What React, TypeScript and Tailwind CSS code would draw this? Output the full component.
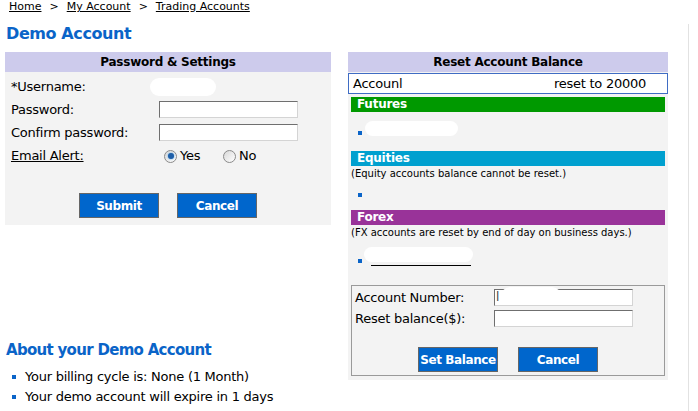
import React from "react";

const font = "font-['DejaVu_Sans','Verdana',sans-serif]";

function Bullet() {
  return <span className="inline-block w-[4px] h-[4px] bg-[#0a64c8] shrink-0" />;
}

function Blob({ className }: { className: string }) {
  return <span className={`absolute bg-white rounded-full ${className}`} />;
}

function Radio({ checked }: { checked?: boolean }) {
  return (
    <span className="inline-flex items-center justify-center w-[13px] h-[13px] rounded-full border border-[#8a8a8a] bg-gradient-to-br from-[#d8d8d8] to-white">
      {checked && <span className="w-[6px] h-[6px] rounded-full bg-[#1f5fa8] shadow-[0_0_2px_#4aa3e8]" />}
    </span>
  );
}

function TextInput({ value }: { value?: string }) {
  return (
    <div className="w-[139px] h-[17px] bg-white border border-t-[#6f6f6f] border-l-[#6f6f6f] border-b-[#d4d4d4] border-r-[#d4d4d4] text-[12px] leading-[15px] pl-[1px] text-[#444] relative">
      {value}
      {value && <Blob className="left-[6px] -top-[3px] w-[60px] h-[18px]" />}
    </div>
  );
}

function BlueButton({ label }: { label: string }) {
  return (
    <button className="w-[80px] h-[25px] bg-[#0066cc] border border-[#666] text-white font-bold text-[12px] tracking-[-0.4px] leading-none whitespace-nowrap overflow-hidden">
      {label}
    </button>
  );
}

function Bar({ title, color }: { title: string; color: string }) {
  return (
    <div className={`mx-[3px] h-[15px] ${color} text-white font-bold text-[12px] leading-[15px] pl-[6px]`}>
      {title}
    </div>
  );
}

export default function App() {
  return (
    <div className={`w-[698px] h-[411px] bg-white overflow-hidden text-black tracking-[-0.25px] ${font}`}>
      {/* breadcrumb */}
      <div className="h-[24px] pl-[9px] flex gap-[8px] text-[11px] leading-[14px] tracking-normal">
        <span className="underline">Home</span>
        <span>&gt;</span>
        <span className="underline">My Account</span>
        <span>&gt;</span>
        <span className="underline">Trading Accounts</span>
      </div>

      <div className="w-[689px] h-[387px] border-r border-[#e2e2e2]">
        <h1 className="h-[28px] pl-[6px] text-[16px] leading-[20px] font-bold tracking-[-0.4px] text-[#0a64c8]">Demo Account</h1>

        <div className="flex pl-[5px] gap-[17px]">
          {/* left column */}
          <div className="w-[326px]">
            <div className="bg-[#f3f3f3]">
              <div className="h-[20px] bg-[#cdcbec] text-center font-bold text-[12px] leading-[20px]">Password &amp; Settings</div>
              <div className="pt-[3px] pb-[7px] text-[13px]">
                <div className="h-[23px] flex items-center pl-[6px]">
                  <span className="w-[148px]">*Username:</span>
                  <span className="relative h-[17px] w-[60px]">
                    <Blob className="-left-[9px] top-[0px] w-[66px] h-[18px]" />
                  </span>
                </div>
                <div className="h-[23px] flex items-center pl-[6px]">
                  <span className="w-[148px]">Password:</span>
                  <TextInput />
                </div>
                <div className="h-[23px] flex items-center pl-[6px]">
                  <span className="w-[148px]">Confirm password:</span>
                  <TextInput />
                </div>
                <div className="h-[24px] flex items-center pl-[6px]">
                  <span className="w-[153px] underline">Email Alert:</span>
                  <Radio checked />
                  <span className="ml-[3px] w-[43px]">Yes</span>
                  <Radio />
                  <span className="ml-[3px]">No</span>
                </div>
                <div className="mt-[25px] flex justify-center gap-[18px]">
                  <BlueButton label="Submit" />
                  <BlueButton label="Cancel" />
                </div>
              </div>
            </div>

            {/* about */}
            <div className="mt-[116px]">
              <h2 className="pl-[1px] text-[15px] leading-[18px] font-bold tracking-[-0.7px] text-[#0a64c8]">About your Demo Account</h2>
              <ul className="mt-[8px] text-[13px]">
                <li className="h-[20px] flex items-center gap-[9px] pl-[7px]">
                  <Bullet />
                  Your billing cycle is: None (1 Month)
                </li>
                <li className="h-[20px] flex items-center gap-[9px] pl-[7px]">
                  <Bullet />
                  Your demo account will expire in 1 days
                </li>
              </ul>
            </div>
          </div>

          {/* right column */}
          <div className="w-[320px] self-start bg-[#f3f3f3] pb-[4px]">
            <div className="h-[20px] bg-[#cdcbec] text-center font-bold text-[12px] leading-[20px]">Reset Account Balance</div>
            <div className="mt-[1px] h-[21px] bg-white border border-[#3f6cc4] flex items-center justify-between pl-[4px] pr-[21px] text-[13px]">
              <span>Accounl</span>
              <span>reset to 20000</span>
            </div>

            <div className="mt-[3px]">
              <Bar title="Futures" color="bg-[#009900]" />
              <div className="pt-[13px] pb-[10px]">
                <div className="h-[16px] flex items-center pl-[10px] relative">
                  <Bullet />
                  <Blob className="left-[17px] -top-[4px] w-[93px] h-[15px]" />
                </div>
              </div>

              <Bar title="Equities" color="bg-[#00a0cf]" />
              <div className="h-[16px] pl-[3px] text-[10px] leading-[16px] tracking-normal">(Equity accounts balance cannot be reset.)</div>
              <div className="pt-[5px] pb-[7px]">
                <div className="h-[16px] flex items-center pl-[10px]">
                  <Bullet />
                </div>
              </div>

              <Bar title="Forex" color="bg-[#993399]" />
              <div className="h-[16px] pl-[3px] text-[10px] leading-[16px] tracking-normal">(FX accounts are reset by end of day on business days.)</div>
              <div className="pt-[12px]">
                <div className="h-[16px] flex items-center pl-[10px] relative">
                  <Bullet />
                  <span className="ml-[9px] w-[100px] h-[9px] border-b border-black" />
                  <Blob className="left-[16px] -top-[6px] w-[109px] h-[15px]" />
                </div>
              </div>

              <div className="mt-[16px] mx-[3px] border border-[#9a9a9a] pt-[3px] pb-[3px] text-[13px]">
                <div className="h-[17px] flex items-center pl-[3px]">
                  <span className="w-[139px]">Account Number:</span>
                  <TextInput value="l" />
                </div>
                <div className="mt-[4px] h-[17px] flex items-center pl-[3px]">
                  <span className="w-[139px]">Reset balance($):</span>
                  <TextInput />
                </div>
                <div className="mt-[20px] flex justify-center gap-[20px]">
                  <BlueButton label="Set Balance" />
                  <BlueButton label="Cancel" />
                </div>
              </div>
            </div>
          </div>
        </div>
      </div>
    </div>
  );
}
